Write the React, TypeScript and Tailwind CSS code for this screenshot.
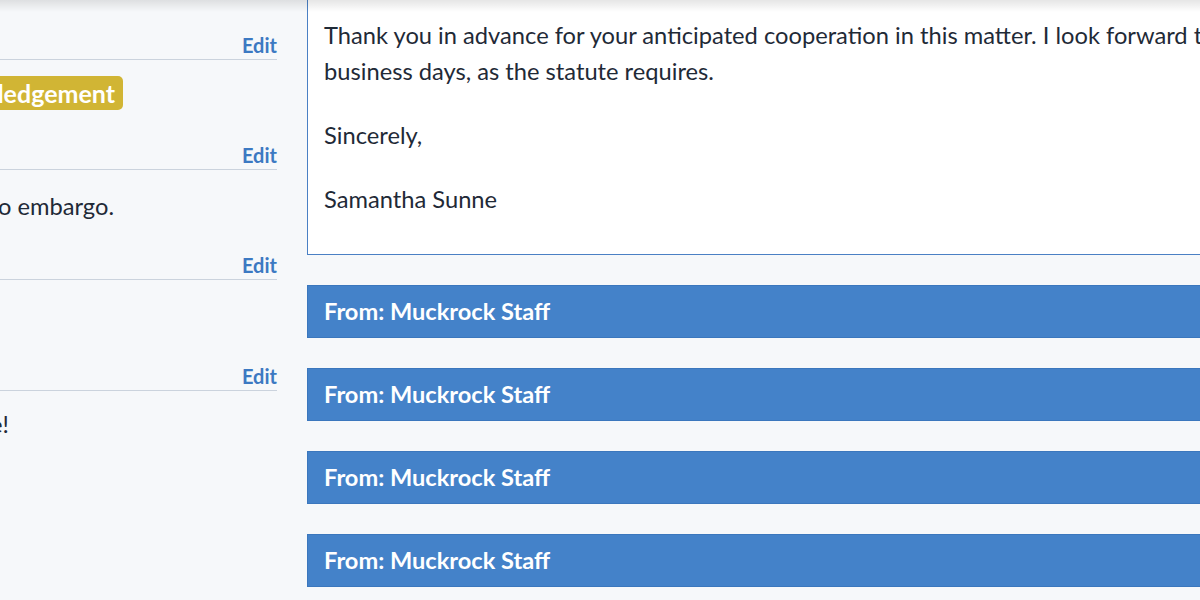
import React from "react";

const font = { fontFamily: "Lato, 'Open Sans', sans-serif" };

function SideHeader() {
  return (
    <div className="h-[30px] flex items-end justify-end border-b border-[#cbd3dd]">
      <a className="text-[20px] leading-[28px] font-bold text-[#3c79c2]">Edit</a>
    </div>
  );
}

// text that runs off the left edge: right-aligned to a fixed end
function ClipRight({ end, children }: { end: number; children: React.ReactNode }) {
  return (
    <div className="flex justify-end whitespace-nowrap" style={{ width: end }}>
      {children}
    </div>
  );
}

function Sidebar() {
  return (
    <div className="w-[277px] shrink-0 pt-[30px]">
      <SideHeader />
      <div className="h-[80px] pt-[16px]">
        <ClipRight end={123}>
          <span className="inline-block bg-[#d1b534] text-white font-bold text-[25px] leading-[34px] px-[8px] rounded-[5px]">
            Acknowledgement
          </span>
        </ClipRight>
      </div>
      <SideHeader />
      <div className="h-[80px] pt-[18px] text-[23.7px] leading-[36px] text-[#1f2a37]">
        <ClipRight end={114}>
          <span>This request has no embargo.</span>
        </ClipRight>
      </div>
      <SideHeader />
      <div className="h-[80.5px]" />
      <SideHeader />
      <div className="h-[80px] pt-[15px] text-[23.7px] leading-[36px] text-[#1f2a37]">
        <ClipRight end={9}>
          <span>Thanks for the update!</span>
        </ClipRight>
      </div>
    </div>
  );
}

function StaffBar() {
  return (
    <div className="h-[53px] flex items-center bg-[#4482c9] border border-[#3b77bd] px-[16px]">
      <span className="text-white font-bold text-[23.6px] pt-[1px]">From: Muckrock Staff</span>
    </div>
  );
}

export default function App() {
  return (
    <div className="relative w-[1200px] h-[600px] overflow-hidden bg-[#f6f8fa] text-[#1f2a37]" style={font}>
      <div className="flex gap-[30px]">
        <Sidebar />
        <div className="w-[1000px] shrink-0">
          <div className="-mt-[40px] bg-white border border-[#4a80c4] border-t-0 pl-[16px] pt-[57px] pb-[37px] text-[23.7px] leading-[36px] text-[#1f2a37]">
            <p className="whitespace-nowrap">
              Thank you in advance for your anticipated cooperation in this matter. I look forward to receiving your response within 5
            </p>
            <p>business days, as the statute requires.</p>
            <p className="mt-[28px]">Sincerely,</p>
            <p className="mt-[28px]">Samantha Sunne</p>
          </div>
          <div className="mt-[30px] flex flex-col gap-[30px]">
            <StaffBar />
            <StaffBar />
            <StaffBar />
            <StaffBar />
          </div>
        </div>
      </div>
      {/* header shadow falling over the page */}
      <div className="absolute top-0 left-0 right-0 h-[12px] bg-gradient-to-b from-black/10 to-transparent" />
    </div>
  );
}
